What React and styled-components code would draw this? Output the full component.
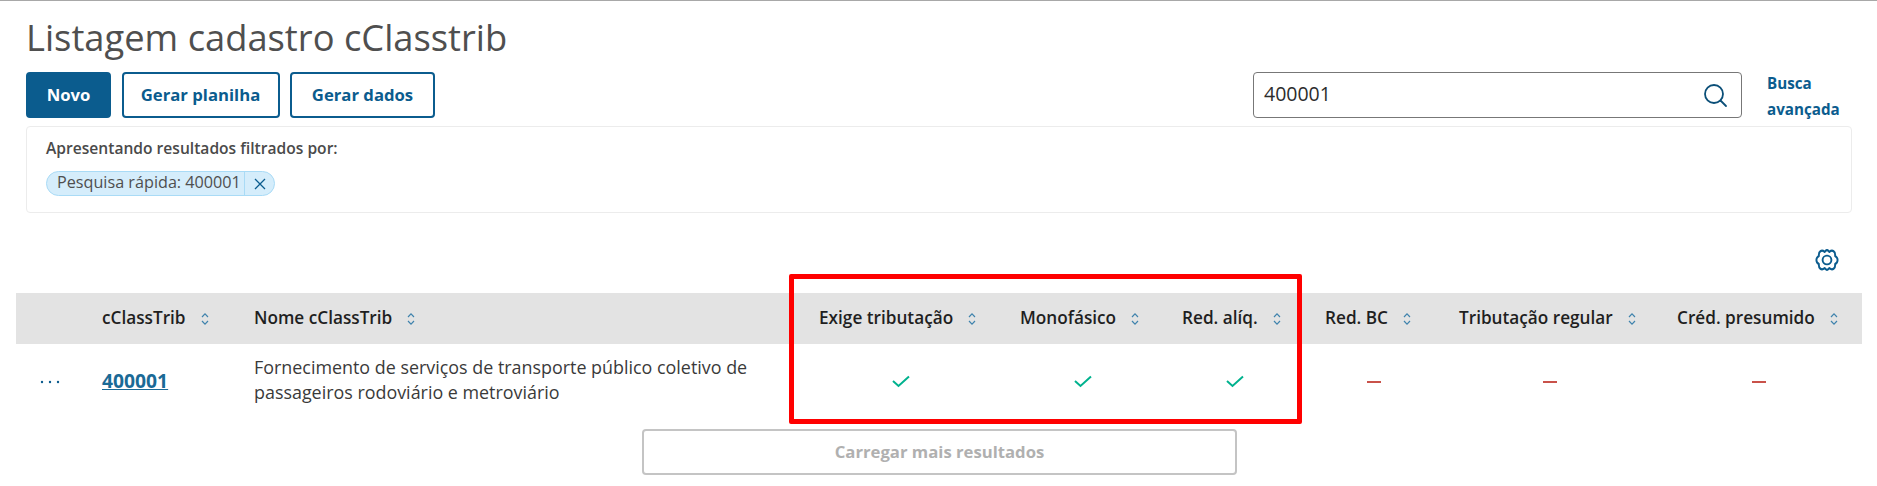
import React from "react";
import styled, { createGlobalStyle } from "styled-components";

const FONT = `"Open Sans", Lato, "Liberation Sans", sans-serif`;
const BLUE = "#0b5c8e";

// column widths of the table, shared by the header and the rows
const COLUMNS = "70px 152px 565px 201px 162px 143px 134px 218px 201px";

const GlobalStyle = createGlobalStyle`
  html, body {
    margin: 0;
    padding: 0;
    background: #fff;
  }
  body {
    font-family: ${FONT};
  }
`;

const Page = styled.div`
  position: relative;
  width: 1877px;
  height: 486px;
  overflow: hidden;
  box-sizing: border-box;
  border-top: 1px solid #a8a8a8;
  padding-top: 2px;
`;

const Header = styled.div`
  padding: 0 25px 0 26px;
`;

const Title = styled.h1`
  margin: 0;
  height: 69px;
  padding-top: 10px;
  box-sizing: border-box;
  font-size: 36.3px;
  line-height: 48px;
  font-weight: 400;
  color: #4f4f4f;
`;

const Toolbar = styled.div`
  display: flex;
  align-items: flex-start;
  height: 54px;
`;

const Button = styled.button`
  height: 46px;
  width: ${(p) => p.$width}px;
  margin-right: 10.5px;
  padding: 0 0 2px;
  box-sizing: border-box;
  border: 2px solid ${BLUE};
  border-radius: 4px;
  background: ${(p) => (p.$primary ? BLUE : "#fff")};
  color: ${(p) => (p.$primary ? "#fff" : BLUE)};
  font-family: ${FONT};
  font-size: 16.7px;
  font-weight: 700;
`;

const Search = styled.div`
  margin-left: auto;
  display: flex;
  align-items: center;
  justify-content: space-between;
  width: 489px;
  height: 46px;
  box-sizing: border-box;
  padding: 0 13px 0 10px;
  border: 1px solid #777;
  border-radius: 4px;
  font-size: 19.5px;
  color: #2c2c2c;
`;

const SearchValue = styled.span`
  margin-top: -4px;
`;

const AdvancedLink = styled.a`
  width: 85px;
  margin-left: 25px;
  margin-top: -2px;
  font-size: 15.2px;
  line-height: 26px;
  font-weight: 700;
  color: ${BLUE};
`;

const FilterPanel = styled.div`
  height: 87px;
  box-sizing: border-box;
  padding: 9px 19px;
  border: 1px solid #ececec;
  border-radius: 4px;
`;

const FilterLabel = styled.div`
  font-size: 15.6px;
  line-height: 24px;
  font-weight: 600;
  color: #4a4a4a;
`;

const Chip = styled.div`
  display: inline-flex;
  align-items: center;
  height: 25px;
  margin-top: 11px;
  box-sizing: border-box;
  border: 1px solid #a9dbf6;
  border-radius: 13px;
  background: #d5edfb;
  font-size: 16.2px;
  color: #4f4f4f;
`;

const ChipText = styled.span`
  width: 198px;
  box-sizing: border-box;
  padding-left: 10px;
  line-height: 21px;
  padding-bottom: 2px;
  border-right: 1px solid #a9dbf6;
  white-space: nowrap;
`;

const ChipClose = styled.span`
  display: flex;
  justify-content: center;
  width: 29px;
  color: ${BLUE};
`;

const GearRow = styled.div`
  display: flex;
  justify-content: flex-end;
  height: 80px;
  box-sizing: border-box;
  padding: 34px 37px 0 0;
  color: ${BLUE};
`;

const Table = styled.div`
  margin-left: 16px;
  width: 1846px;
`;

const HeadRow = styled.div`
  display: grid;
  grid-template-columns: ${COLUMNS};
  height: 51px;
  align-items: center;
  background: #e3e3e3;
`;

const HeadCell = styled.div`
  display: flex;
  align-items: center;
  padding: 0 0 2px 16px;
  font-size: 17.2px;
  font-weight: 600;
  color: #1f1f1f;
  white-space: nowrap;
`;

const SortIcon = styled.svg`
  margin: 2px 0 0 13px;
  flex: none;
`;

const BodyRow = styled.div`
  display: grid;
  grid-template-columns: ${COLUMNS};
  height: 75px;
  align-items: center;
`;

const ActionCell = styled.div`
  padding-left: 24px;
  color: ${BLUE};
  display: flex;
`;

const CodeLink = styled.a`
  padding: 0 0 2px 16px;
  font-size: 19.3px;
  font-weight: 700;
  color: #1a6a96;
  text-decoration: underline;
`;

const NameCell = styled.div`
  padding: 0 0 3px 16px;
  font-size: 17.9px;
  line-height: 25px;
  color: #3a3a3a;
`;

const FlagCell = styled.div`
  display: flex;
  justify-content: center;
  padding-right: 5px;
`;

const Dash = styled.span`
  width: 14px;
  height: 2px;
  background: #c9524a;
`;

const LoadMore = styled.button`
  display: block;
  width: 595px;
  height: 46px;
  margin: 10px 0 0 642px;
  padding: 0 0 2px;
  box-sizing: border-box;
  border: 2px solid #c4c4c4;
  border-radius: 4px;
  background: #fff;
  color: #b0b0b0;
  font-family: ${FONT};
  font-size: 16.7px;
  font-weight: 700;
`;

// red rectangle somebody drew on top of the screenshot
const Highlight = styled.div`
  position: absolute;
  left: 789px;
  top: 273px;
  width: 513px;
  height: 150px;
  box-sizing: border-box;
  border: 5px solid #ff0000;
  border-radius: 2px;
  pointer-events: none;
`;

const Sort = () => (
  <SortIcon width="12" height="14" viewBox="0 0 12 14" fill="none" stroke="#3f83ad" strokeWidth="1.2">
    <path d="M3 5l3-3.2L9 5" />
    <path d="M3 9l3 3.2L9 9" />
  </SortIcon>
);

const Check = () => (
  <svg width="18" height="13" viewBox="0 0 18 13" fill="none" stroke="#00b28e" strokeWidth="2">
    <path d="M1 6l5.5 5L17 1.5" />
  </svg>
);

const SearchGlyph = () => (
  <svg width="26" height="26" viewBox="0 0 26 26" fill="none" stroke="#0b4f78" strokeWidth="1.8" strokeLinecap="round">
    <circle cx="12" cy="12" r="9" />
    <path d="M18.5 18.5L24 24" />
  </svg>
);

// six rounded lobes round a small ring, flat side up
const Gear = () => (
  <svg width="26" height="26" viewBox="0 0 26 26" fill="none" stroke="currentColor" strokeWidth="1.9" strokeLinejoin="round">
    <path
      transform="translate(13 13) scale(1 1.2) rotate(90) translate(-13 -13)"
      d="M13 2.4c1.6 0 2.7 1 3.4 2.5 1.6-.2 3.1.1 3.9 1.5.8 1.4.4 2.9-.5 4.2 1 1.2 1.4 1.5 1.4 2.4s-.4 1.2-1.4 2.4c.9 1.3 1.3 2.8.5 4.2-.8 1.4-2.3 1.7-3.9 1.5-.7 1.5-1.8 2.5-3.4 2.5s-2.7-1-3.4-2.5c-1.6.2-3.1-.1-3.9-1.5-.8-1.4-.4-2.9.5-4.2-1-1.2-1.4-1.5-1.4-2.4s.4-1.2 1.4-2.4c-.9-1.3-1.3-2.8-.5-4.2.8-1.4 2.3-1.7 3.9-1.5.7-1.5 1.8-2.5 3.4-2.5z"
    />
    <circle cx="13" cy="13" r="4.4" />
  </svg>
);

const Close = () => (
  <svg width="14" height="14" viewBox="0 0 14 14" fill="none" stroke="currentColor" strokeWidth="1.3">
    <path d="M2 2l10 10M12 2L2 12" />
  </svg>
);

const Dots = () => (
  <svg width="20" height="4" viewBox="0 0 20 4" fill="currentColor">
    <circle cx="2" cy="2" r="1.2" />
    <circle cx="10" cy="2" r="1.2" />
    <circle cx="18" cy="2" r="1.2" />
  </svg>
);

const columns = [
  "cClassTrib",
  "Nome cClassTrib",
  "Exige tributação",
  "Monofásico",
  "Red. alíq.",
  "Red. BC",
  "Tributação regular",
  "Créd. presumido",
];

const flags = [true, true, true, false, false, false];

const App = () => (
  <Page>
    <GlobalStyle />
    <Header>
      <Title>Listagem cadastro cClasstrib</Title>
      <Toolbar>
        <Button $primary $width={85}>Novo</Button>
        <Button $width={158}>Gerar planilha</Button>
        <Button $width={145}>Gerar dados</Button>
        <Search>
          <SearchValue>400001</SearchValue>
          <SearchGlyph />
        </Search>
        <AdvancedLink>Busca avançada</AdvancedLink>
      </Toolbar>
      <FilterPanel>
        <FilterLabel>Apresentando resultados filtrados por:</FilterLabel>
        <Chip>
          <ChipText>Pesquisa rápida: 400001</ChipText>
          <ChipClose><Close /></ChipClose>
        </Chip>
      </FilterPanel>
    </Header>
    <GearRow><Gear /></GearRow>
    <Table>
      <HeadRow>
        <span />
        {columns.map((name) => (
          <HeadCell key={name}>{name}<Sort /></HeadCell>
        ))}
      </HeadRow>
      <BodyRow>
        <ActionCell><Dots /></ActionCell>
        <CodeLink>400001</CodeLink>
        <NameCell>
          Fornecimento de serviços de transporte público coletivo de passageiros rodoviário e metroviário
        </NameCell>
        {flags.map((on, i) => (
          <FlagCell key={i}>{on ? <Check /> : <Dash />}</FlagCell>
        ))}
      </BodyRow>
    </Table>
    <LoadMore disabled>Carregar mais resultados</LoadMore>
    <Highlight />
  </Page>
);

export default App;
